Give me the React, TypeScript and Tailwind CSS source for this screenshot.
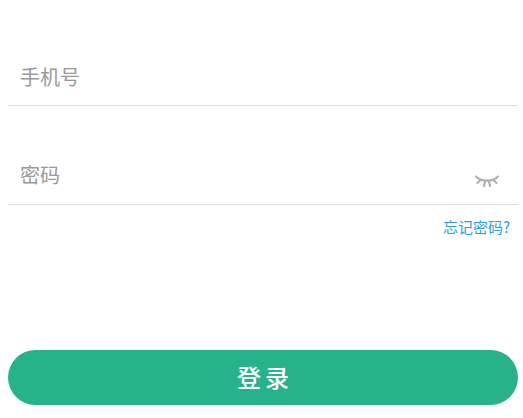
function EyeClosed() {
  return (
    <svg width="24" height="14" viewBox="0 0 24 14" fill="none" stroke="#b0b0b0" strokeWidth="2.2" strokeLinecap="round">
      <path d="M1 1.5 C6 7 18 7 23 1.5" />
      <path d="M5 5.5 L2.5 8" />
      <path d="M10 7 L9 11" />
      <path d="M14 7 L15 11" />
      <path d="M19 5.5 L21.5 8" />
    </svg>
  );
}

export default function App() {
  return (
    <div className="h-[418px] w-[523px] bg-white pl-[8px] pr-[5px] font-['Noto_Sans_CJK_SC','Liberation_Sans',sans-serif]">
      <div className="flex h-[106px] items-end border-b border-[#dddddd] pb-[14px] pl-[12px]">
        <span className="text-[20px] leading-[28px] text-[#999999]">手机号</span>
      </div>
      <div className="mt-[50px] flex h-[49px] items-end justify-between border-b border-[#dddddd] pb-[15px] pl-[12px] pr-[19px]">
        <span className="text-[20px] leading-[28px] text-[#999999]">密码</span>
        <EyeClosed />
      </div>
      <div className="mt-[12px] flex justify-end pr-[8px]">
        <a className="text-[15px] leading-[20px] text-[#2d9fe0]">忘记密码?</a>
      </div>
      <button
        type="button"
        className="mt-[113px] h-[55px] w-full rounded-full bg-[#28b28b] pb-[2px] pl-[4px] text-[24px] font-medium tracking-[4px] text-white"
      >
        登录
      </button>
    </div>
  );
}
